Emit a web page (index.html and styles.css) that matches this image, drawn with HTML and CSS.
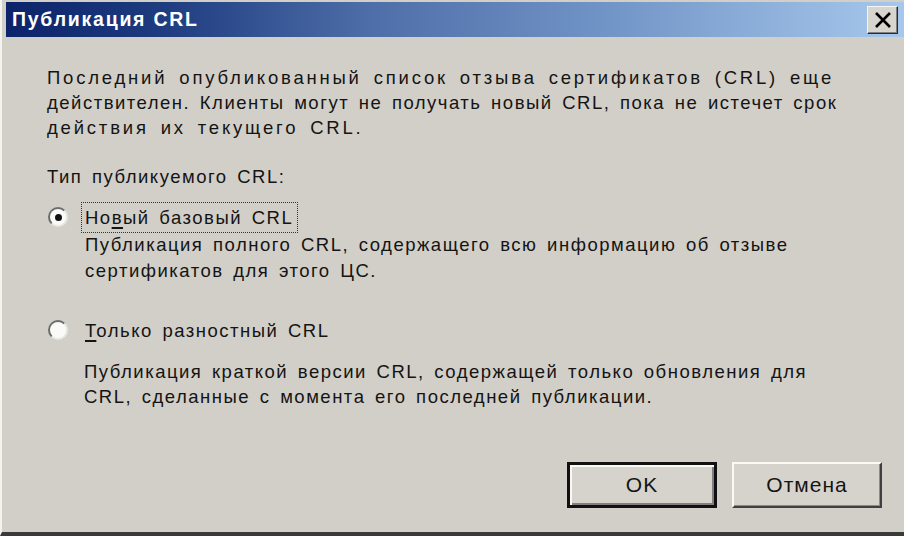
FILE: index.html
```html
<!DOCTYPE html>
<html lang="ru">
<head>
<meta charset="utf-8">
<title>Публикация CRL</title>
<link rel="stylesheet" href="styles.css">
</head>
<body>
<div class="window">
  <div class="titlebar">
    <span class="title">Публикация CRL</span>
    <button class="close" aria-label="Закрыть">
      <svg width="18" height="16" viewBox="0 0 18 16"><path d="M2 1 L16 15 M16 1 L2 15" stroke="#000" stroke-width="2.6" fill="none"/></svg>
    </button>
  </div>
  <div class="content">
    <p class="intro"><span class="loose">Последний опубликованный список отзыва сертификатов (CRL) еще</span><br>действителен. Клиенты могут не получать новый CRL, пока не истечет срок<br><span class="loose">действия их текущего CRL.</span></p>
    <p class="group-label">Тип публикуемого CRL:</p>
    <div class="option">
      <span class="radio checked"><span class="dot"></span></span>
      <span class="label focused">Но<u>в</u>ый базовый CRL</span>
    </div>
    <p class="desc">Публикация полного CRL, содержащего всю информацию об отзыве<br>сертификатов для этого ЦС.</p>
    <div class="option second">
      <span class="radio"></span>
      <span class="label"><u>Т</u>олько разностный CRL</span>
    </div>
    <p class="desc desc2">Публикация краткой версии CRL, содержащей только обновления для<br>CRL, сделанные с момента его последней публикации.</p>
    <div class="buttons">
      <button class="btn default">OK</button>
      <button class="btn">Отмена</button>
    </div>
  </div>
</div>
</body>
</html>
```
FILE: styles.css
```css
html, body {
  margin: 0;
  padding: 0;
  background: #d2cfc8;
}
.window {
  width: 904px;
  height: 536px;
  box-sizing: border-box;
  background: #d2cfc8;
  border-left: 2px solid #f4f3ee;
  border-bottom: 4px solid #3a3a3a;
  padding-left: 4px;
  padding-top: 2px;
  display: flex;
  flex-direction: column;
  font-family: "Liberation Sans", Arial, sans-serif;
  color: #141414;
}
.titlebar {
  height: 35px;
  flex: none;
  display: flex;
  align-items: center;
  justify-content: space-between;
  background: linear-gradient(to right, #0c2369 0%, #1f3d80 18%, #4d6da8 40%, #7396c8 68%, #a6c8ec 100%);
  padding-left: 6px;
  padding-right: 6px;
}
.title {
  color: #fff;
  font-weight: bold;
  font-size: 19.5px;
  letter-spacing: 1.75px;
}
.close {
  width: 31px;
  height: 28px;
  padding: 0;
  margin: 0;
  display: flex;
  align-items: center;
  justify-content: center;
  background: #d8d5ce;
  border: 1px solid;
  border-color: #f6f5f1 #2b2b2b #2b2b2b #f6f5f1;
  box-shadow: inset -1px -1px 0 #808080;
}
.content {
  flex: 1;
  padding: 28px 0 0 41px;
  display: flex;
  flex-direction: column;
  font-size: 18.5px;
  letter-spacing: 1.5px;
  word-spacing: 3px;
  line-height: 25px;
}
p { margin: 0; }
.loose {
  letter-spacing: 2.8px;
  word-spacing: 4px;
}
.group-label { margin-top: 24px; }
.option {
  display: flex;
  align-items: center;
  height: 30px;
  margin-top: 13px;
  margin-left: 1px;
}
.option.second { margin-top: 31px; }
.radio {
  width: 20px;
  height: 20px;
  box-sizing: border-box;
  border-radius: 50%;
  background: #fafaf8;
  border: 2px solid;
  border-color: #6c6c6c #e8e8e4 #e8e8e4 #6c6c6c;
  display: flex;
  align-items: center;
  justify-content: center;
  margin-right: 13px;
  flex: none;
}
.dot {
  width: 7px;
  height: 7px;
  border-radius: 50%;
  background: #111;
}
.label {
  padding: 2px 4px 2px 3px;
  border: 1px dotted transparent;
}
.label.focused { border-color: #333; }
.label u { text-decoration-thickness: 2px; text-underline-offset: 3px; }
.desc { margin-left: 38px; line-height: 26px; }
.desc2 { margin-top: 14px; margin-left: 37px; line-height: 25px; }
.buttons {
  display: flex;
  gap: 15px;
  margin-top: auto;
  margin-bottom: 24px;
  margin-left: 520px;
}
.btn {
  width: 150px;
  height: 46px;
  font-family: "Liberation Sans", Arial, sans-serif;
  font-size: 21px;
  letter-spacing: 1px;
  color: #141414;
  background: #d6d3cc;
  border: 2px solid;
  border-color: #faf9f6 #404040 #404040 #faf9f6;
  box-shadow: inset -1px -1px 0 #8a8a8a;
  padding: 0;
}
.btn.default {
  border: 3px solid #111;
  box-shadow: inset 2px 2px 0 #faf9f6, inset -2px -2px 0 #808080;
}
```
